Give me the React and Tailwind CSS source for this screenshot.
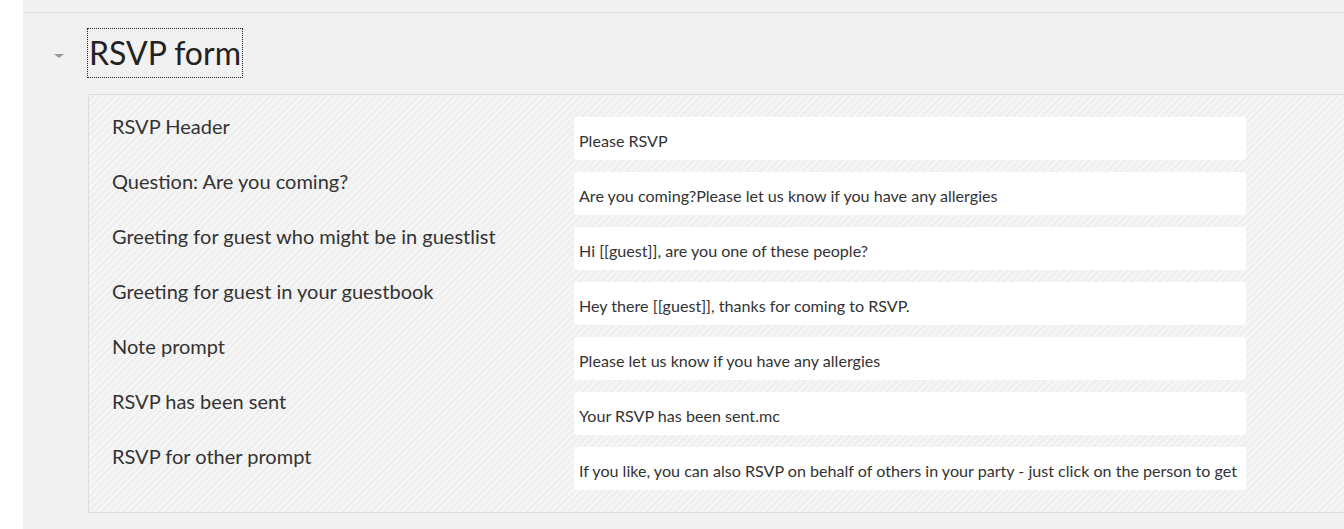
import React from 'react';

const rows = [
  { label: 'RSVP Header', value: 'Please RSVP' },
  { label: 'Question: Are you coming?', value: 'Are you coming?Please let us know if you have any allergies' },
  { label: 'Greeting for guest who might be in guestlist', value: 'Hi [[guest]], are you one of these people?' },
  { label: 'Greeting for guest in your guestbook', value: 'Hey there [[guest]], thanks for coming to RSVP.' },
  { label: 'Note prompt', value: 'Please let us know if you have any allergies' },
  { label: 'RSVP has been sent', value: 'Your RSVP has been sent.mc' },
  {
    label: 'RSVP for other prompt',
    value: 'If you like, you can also RSVP on behalf of others in your party - just click on the person to get',
  },
];

const App = () => {
  return (
    <div className="flex h-[529px] w-[1344px] overflow-hidden bg-white font-['Lato','Open_Sans',sans-serif] text-[#333]">
      <div className="w-[23px] shrink-0 bg-white" />
      <div className="flex-1 bg-[#f1f1f1]">
        <div className="h-[13px] border-b border-[#d9d9d9]" />
        <div className="flex items-center pt-[15px]">
          <div className="flex w-[64px] justify-end pr-[23px]">
            <span className="mt-[5px] h-0 w-0 border-x-[5px] border-t-[4px] border-x-transparent border-t-[#999]" />
          </div>
          <h2 className="border border-dotted border-[#222] px-[1px] text-[32px] leading-[48px] font-normal text-[#222]">
            RSVP form
          </h2>
        </div>
        <div className="ml-[65px] mt-[16px] border border-r-0 border-[#dcdcdc] bg-[repeating-linear-gradient(135deg,#f6f6f6_0px,#f6f6f6_2.5px,#efefef_2.5px,#efefef_5px)] pb-[22px] pt-[22px]">
          <div className="flex flex-col gap-[12px]">
            {rows.map((row) => (
              <div key={row.label} className="flex items-start">
                <div className="w-[485px] shrink-0 pl-[23px] text-[20px] leading-[18px]">{row.label}</div>
                <div className="h-[43px] w-[672px] shrink-0 overflow-hidden whitespace-nowrap rounded-[3px] bg-white px-[5px] pt-[14px] text-[16.1px] leading-[20px]">
                  {row.value}
                </div>
              </div>
            ))}
          </div>
        </div>
      </div>
    </div>
  );
};

export default App;
